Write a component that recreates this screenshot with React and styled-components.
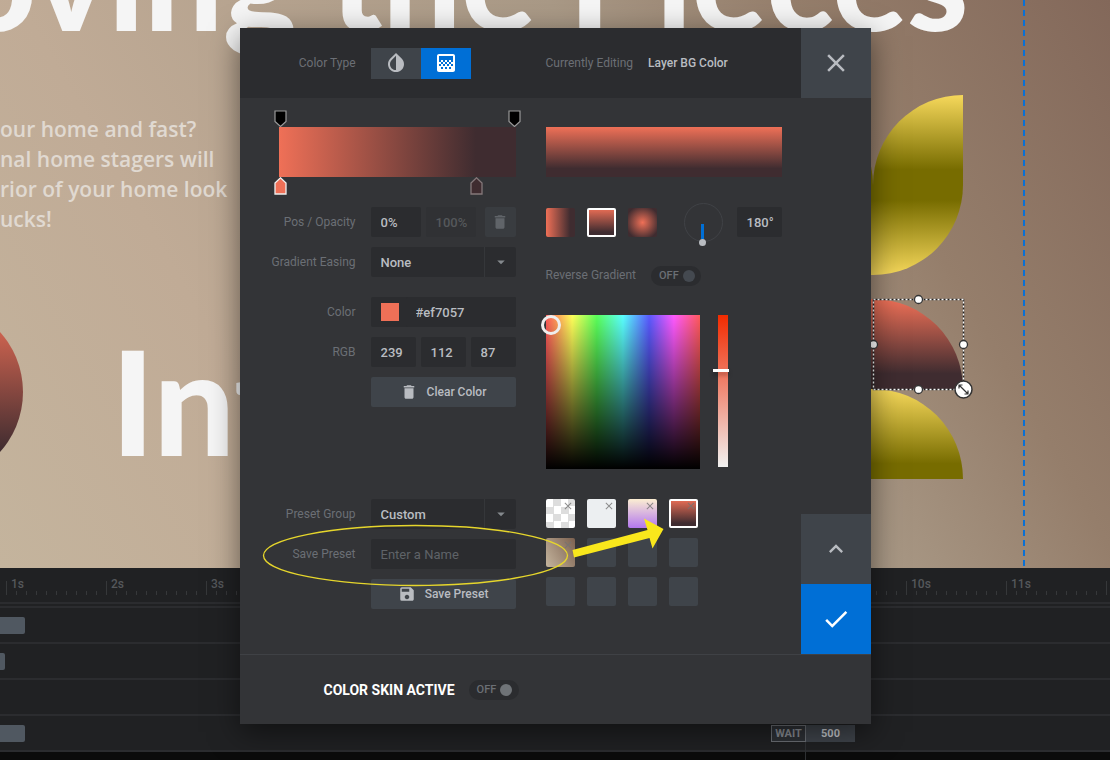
import React from 'react'
import styled, { createGlobalStyle } from 'styled-components';
import {
  MdInvertColors,
  MdGradient,
  MdClose,
  MdDelete,
  MdSave,
  MdKeyboardArrowUp,
  MdCheck,
  MdArrowDropDown
} from 'react-icons/md';

const GlobalStyle = createGlobalStyle`
    * {
        box-sizing: border-box;
    }
    body {
        margin: 0;
        background-color: #0b0b0b;
        font-family: Roboto, "Liberation Sans", sans-serif;
        font-size: 12px;
    }
    button, input, select {
        font-family: inherit;
        margin: 0;
    }
`;

const Page = styled.div`
    position: relative;
    display: flex;
    flex-direction: column;
    min-height: 100vh;
    overflow: hidden;
`;

/* Stage */

const Stage = styled.main`
    position: relative;
    flex: 1;
    overflow: hidden;
    background: linear-gradient(60deg, #c4b49d 0%, #c0ab96 24%, #a99986 61%, #957e6b 78%, #83685a 100%);
`;

const StageTitle = styled.h1`
    position: absolute;
    margin: 0;
    top: ${props => props.top}px;
    left: ${props => props.left}px;
    font-family: Lato, sans-serif;
    font-size: ${props => props.size}px;
    line-height: 160px;
    font-weight: 900;
    white-space: nowrap;
    color: #f5f5f5;
`;

const StageText = styled.p`
    position: absolute;
    top: 114px;
    left: 0;
    margin: 0;
    font-family: "Open Sans", sans-serif;
    font-size: 21px;
    line-height: 30px;
    font-weight: 600;
    white-space: pre;
    color: #e0d9d1;
`;

const Shape = styled.div`
    position: absolute;
    top: ${props => props.top}px;
    left: ${props => props.left}px;
    width: ${props => props.size || 90}px;
    height: ${props => props.size || 90}px;
    border-radius: ${props => props.radius || 0};
    background: linear-gradient(${props => props.flip ? '0deg' : '180deg'}, ${props => props.tone === 'red' ? '#ef7057, #3f2c30 83%' : '#f6d85b, #776c00 83%'});
`;

const Guide = styled.div`
    position: absolute;
    top: 0;
    bottom: 0;
    left: 1023px;
    width: 2px;
    background: repeating-linear-gradient(180deg, #0a70d4 0 6px, transparent 6px 10px);
`;

const SelectionBox = styled.svg`
    position: absolute;
    top: 289px;
    left: 863px;
`;

/* Timeline */

const Timeline = styled.section`
    padding-bottom: 8px;
    background: linear-gradient(#202123, #202123) top / 100% calc(100% - 8px) no-repeat #0b0b0b;
`;

const Ruler = styled.div`
    display: flex;
    height: 36px;
    padding: 12px 0 0 6px;
    border-bottom: 2px solid #2b2c2f;
    overflow: hidden;
`;

const Second = styled.div`
    flex: none;
    width: 100px;
    height: 15px;
    padding-left: 5px;
    font-size: 12px;
    line-height: 8px;
    font-weight: 500;
    color: #55585b;
    background:
        linear-gradient(#36383a, #36383a) left / 1px 14px no-repeat,
        repeating-linear-gradient(90deg, #36383a 0 1px, transparent 1px 10px) bottom / 100% 4px no-repeat;
`;

const Tracks = styled.div`
    margin-top: 2px;
    border-top: 2px solid #2b2c2f;
`;

const Track = styled.div`
    position: relative;
    height: 36px;
    padding-top: 9px;
    border-bottom: 2px solid #2b2c2f;
`;

const Clip = styled.div`
    height: 17px;
    border-radius: 0 2px 2px 0;
    background-color: #505861;
`;

const Wait = styled.div`
    position: absolute;
    top: 9px;
    left: 771px;
    display: flex;
    width: 84px;
    height: 17px;
    font-size: 11px;
    line-height: 15px;
    font-weight: 700;
    text-align: center;
    color: #c5c8cc;
    background-color: #3f444b;

    &::after {
        content: '';
        position: absolute;
        top: 17px;
        left: 34px;
        width: 1px;
        height: 18px;
        background-color: #303235;
    }
`;

const WaitLabel = styled.span`
    width: 35px;
    border: 1px solid #6b6f75;
    color: #888c93;
    background-color: #2e3136;
`;

const WaitValue = styled.span`
    flex: 1;
    padding-top: 1px;
`;

/* Dialog */

const Overlay = styled.div`
    position: absolute;
    inset: 0;
    display: flex;
    justify-content: center;
    align-items: flex-start;
    padding-top: 28px;
`;

const Dialog = styled.div`
    position: relative;
    width: 631px;
    background-color: #333437;
    box-shadow: 0 8px 28px rgba(0, 0, 0, 0.5);
`;

const Header = styled.header`
    display: flex;
    align-items: center;
    gap: 30px;
    height: 70px;
    background-color: #2b2c2f;
`;

const Editing = styled.div`
    display: flex;
    flex: 1;
    gap: 15px;
    color: #6b6f75;
`;

const EditingName = styled.span`
    font-weight: 500;
    color: #b9bcc1;
`;

const SquareButton = styled.button`
    display: flex;
    align-items: center;
    justify-content: center;
    width: 70px;
    height: 70px;
    padding: 0;
    border: none;
    font-size: ${props => props.size || 30}px;
    color: ${props => props.$primary ? '#ffffff' : '#b9bcc1'};
    background-color: ${props => props.$primary ? '#006fd6' : '#3f444a'};
    cursor: pointer;
`;

const Body = styled.div`
    display: flex;
    height: 556px;
`;

const LeftColumn = styled.div`
    width: 276px;
    margin-right: 30px;
    padding-top: 12px;
`;

const RightColumn = styled.div`
    flex: 1;
    padding-top: 29px;
`;

const SideColumn = styled.div`
    display: flex;
    flex-direction: column;
    justify-content: flex-end;
`;

const GradientEditor = styled.div`
    margin: 0 0 13px 39px;
`;

const PinRow = styled.div`
    position: relative;
    height: 17px;
`;

const Pin = styled.svg`
    position: absolute;
    top: 0;
    left: ${props => props.at}%;
    margin-left: -5px;
`;

const GradientBar = styled.div`
    height: 50px;
    background: linear-gradient(90deg, #ef7057, #3f2c30 83%);
`;

const Group = styled.div`
    display: flex;
    flex-direction: column;
    gap: 10px;
    margin-bottom: ${props => props.space || 0}px;
`;

const Field = styled.div`
    display: flex;
    align-items: center;
    gap: 15px;
    width: 276px;
`;

const Label = styled.label`
    width: 116px;
    text-align: right;
    color: #6b6f75;
`;

const Controls = styled.div`
    display: flex;
    gap: ${props => props.gap === undefined ? 5 : props.gap}px;
    width: 145px;
`;

const Input = styled.input`
    width: ${props => props.$width || '100%'};
    height: 30px;
    padding: 0 0 0 10px;
    border: none;
    border-radius: 2px;
    outline: none;
    font-size: 13px;
    font-weight: 500;
    color: #b9bcc1;
    background-color: #2b2c2f;

    &:disabled {
        color: #55585b;
        background-color: #303134;
    }
    &::placeholder {
        font-weight: 400;
        color: #5f6368;
    }
`;

const TypeButton = styled.button`
    display: flex;
    align-items: center;
    justify-content: center;
    width: 50px;
    height: 31px;
    padding: 0;
    border: none;
    font-size: 24px;
    color: ${props => props.$active ? '#ffffff' : '#b9bcc1'};
    background-color: ${props => props.$active ? '#006fd6' : '#3f444a'};
`;

const IconButton = styled.button`
    display: flex;
    align-items: center;
    justify-content: center;
    width: 31px;
    height: 30px;
    margin-left: auto;
    padding: 0;
    border: none;
    border-radius: 2px;
    font-size: 18px;
    color: #606469;
    background-color: #393c40;
`;

const Button = styled.button`
    display: flex;
    align-items: center;
    justify-content: center;
    gap: 9px;
    width: 100%;
    height: 30px;
    padding: 0;
    border: none;
    border-radius: 2px;
    font-size: 12px;
    font-weight: 500;
    color: #b9bcc1;
    background-color: #3f444a;
    cursor: pointer;

    svg {
        font-size: 18px;
    }
`;

const SelectBox = styled.div`
    position: relative;
    width: 100%;

    svg {
        position: absolute;
        top: 6px;
        right: 6px;
        font-size: 18px;
        color: #85898e;
        pointer-events: none;
    }
`;

const Select = styled.select`
    appearance: none;
    width: 100%;
    height: 30px;
    padding: 0 10px;
    border: none;
    border-radius: 2px;
    font-size: 13px;
    font-weight: 500;
    color: #b9bcc1;
    background: linear-gradient(#35373a, #35373a) 113px 0 / 1px 100% no-repeat #2b2c2f;
`;

const ColorField = styled.div`
    display: flex;
    align-items: center;
    width: 100%;
    padding-left: 10px;
    border-radius: 2px;
    background-color: #2b2c2f;
`;

const ColorChip = styled.span`
    flex: none;
    width: 18px;
    height: 18px;
    margin-right: 7px;
    background-color: #ef7057;
`;

const Preview = styled.div`
    width: 236px;
    height: 50px;
    margin-bottom: 30px;
    background: linear-gradient(180deg, #ef7057, #3f2c30 83%);
`;

const StyleRow = styled.div`
    display: flex;
    align-items: center;
    gap: 12px;
    height: 30px;
    margin-bottom: 29px;
`;

const Swatch = styled.button`
    position: relative;
    width: 29px;
    height: 29px;
    padding: 0;
    border: ${props => props.$selected ? '2px solid #ffffff' : 'none'};
    border-radius: 2px;
    background: ${props => props.$fill || '#3f444a'};
    background-origin: border-box;
    cursor: pointer;

    svg {
        position: absolute;
        top: ${props => props.$selected ? -1 : 1}px;
        right: ${props => props.$selected ? -1 : 1}px;
        font-size: 12px;
        color: rgba(115, 115, 115, 0.8);
    }
`;

const Dial = styled.svg`
    flex: none;
    margin-left: 15px;
    overflow: visible;
`;

const ReverseRow = styled.div`
    display: flex;
    gap: 15px;
    height: 20px;
    margin-bottom: 29px;
    line-height: 18px;
    color: #6b6f75;
`;

const Toggle = styled.label`
    position: relative;
    display: flex;
    align-items: center;
    gap: 4px;
    width: 50px;
    height: 20px;
    padding-left: 8px;
    border-radius: 10px;
    font-size: 11px;
    font-weight: 500;
    color: #6b6f75;
    background-color: #2b2c2f;
    cursor: pointer;
`;

const ToggleInput = styled.input.attrs({ type: 'checkbox' })`
    appearance: none;
    order: 1;
    width: 12px;
    height: 12px;
    border-radius: 50%;
    background-color: ${props => props.$light ? '#6f7377' : '#444950'};
`;

const PickerRow = styled.div`
    display: flex;
    gap: 18px;
    margin-bottom: 30px;
`;

const Picker = styled.div`
    position: relative;
    width: 154px;
    height: 154px;
    background:
        linear-gradient(180deg, transparent, #000000),
        linear-gradient(90deg, #ff5a5a, #ffff5a 17%, #5aff5a 33%, #5affff 50%, #5a5aff 67%, #ff5aff 83%, #ff5a5a);
`;

const PickerHandle = styled.div`
    position: absolute;
    top: 0;
    left: -5px;
    width: 20px;
    height: 20px;
    border: 3px solid #eeeeee;
    border-radius: 50%;
`;

const Shade = styled.input.attrs({ type: 'range' })`
    appearance: none;
    writing-mode: vertical-lr;
    width: 10px;
    height: 152px;
    background: linear-gradient(180deg, #f22b00, #ef7057 36%, #f1f1f0);

    &::-webkit-slider-thumb {
        appearance: none;
        width: 16px;
        height: 3px;
        margin-left: -3px;
        background-color: #ffffff;
        box-shadow: 0 3px 4px rgba(0, 0, 0, 0.3);
    }
`;

const Presets = styled.div`
    display: grid;
    grid-template-columns: repeat(4, 29px);
    gap: 10px 12px;
`;

const Footer = styled.footer`
    display: flex;
    align-items: center;
    gap: 14px;
    height: 70px;
    padding-left: 84px;
    border-top: 1px solid #3f4145;
`;

const FooterTitle = styled.span`
    font-size: 14px;
    font-weight: 700;
    color: #ffffff;
`;

const Annotation = styled.svg`
    position: absolute;
    top: 488px;
    left: 20px;
    pointer-events: none;
`;

const red = '#ef7057, #3f2c30 83%';

const presets = [
  { name: 'Transparent', fill: 'repeating-conic-gradient(#dddddd 0 25%, #ffffff 0 50%) 0 0 / 15px 15px', closable: true },
  { name: 'White', fill: '#eceff1', closable: true },
  { name: 'Violet', fill: 'linear-gradient(#fbeed2, #b377ee)', closable: true },
  { name: 'Sunset', fill: `linear-gradient(${red})`, closable: true, selected: true },
  { name: 'Sand', fill: 'linear-gradient(60deg, #c4b49d, #7c6150)', closable: true },
  { name: 'Empty 1' },
  { name: 'Empty 2' },
  { name: 'Empty 3' },
  { name: 'Empty 4' },
  { name: 'Empty 5' },
  { name: 'Empty 6' },
  { name: 'Empty 7' },
];

const seconds = [1, 2, 3, 4, 5, 6, 7, 8, 9, 10, 11];

const OpacityPin = ({ at }) => (
  <Pin at={at} width="13" height="17">
    <path d="M1 1H12V11.5L6.5 16.5L1 11.5Z" fill="#000" stroke="#999" strokeWidth="1.2" />
  </Pin>
)

const ColorPin = ({ at, fill, stroke }) => (
  <Pin at={at} width="13" height="18">
    <path d="M1 17H12V6L6.5 0.8L1 6Z" fill={fill} stroke={stroke} strokeWidth="1.3" />
  </Pin>
)

const Selection = () => (
  <SelectionBox width="112" height="112">
    <rect x="10.5" y="10.5" width="90" height="90" fill="none" stroke="#222" strokeWidth="1.4" />
    <rect x="10.5" y="10.5" width="90" height="90" fill="none" stroke="#fff" strokeWidth="1.4" strokeDasharray="2 2" />
    {[[55, 10], [10, 55], [100, 55], [55, 100]].map(([x, y]) => (
      <circle key={`${x}-${y}`} cx={x + 0.5} cy={y + 0.5} r="4" fill="#fff" stroke="#333" strokeWidth="1.3" />
    ))}
    <circle cx="100.5" cy="100.5" r="8.5" fill="#fff" stroke="#333" strokeWidth="1.5" />
    <path d="M96.5 96.5L104.5 104.5M96 99.5V96H99.5M105 101.5V105H101.5" fill="none" stroke="#333" strokeWidth="1.2" />
  </SelectionBox>
)

const App = () => {
  return (
    <Page>
        <GlobalStyle />
        <Stage>
            <StageTitle top={-102} left={-174} size={139}>Moving the Pieces</StageTitle>
            <StageText>
                {'our home and fast?\nnal home stagers will\nrior of your home look\nucks!'}
            </StageText>
            <Shape tone='red' top={302} left={-157} size={180} radius='50%' />
            <StageTitle as='h2' top={321} left={111} size={144}>Int</StageTitle>
            <Shape top={95} left={783} radius='0 100% 0 0' />
            <Shape top={95} left={873} radius='100% 0 0 0' />
            <Shape top={185} left={783} flip />
            <Shape top={185} left={873} radius='0 0 100% 0' flip />
            <Shape tone='red' top={299} left={783} />
            <Shape tone='red' top={299} left={873} radius='0 100% 0 0' />
            <Shape top={389} left={783} />
            <Shape top={389} left={873} radius='0 100% 0 0' />
            <Guide />
            <Selection />
        </Stage>
        <Timeline>
            <Ruler>
                {seconds.map(s => <Second key={s}>{s}s</Second>)}
                <Second />
            </Ruler>
            <Tracks>
                <Track><Clip style={{ width: 25 }} /></Track>
                <Track><Clip style={{ width: 5 }} /></Track>
                <Track />
                <Track>
                    <Clip style={{ width: 25 }} />
                    <Wait>
                        <WaitLabel>WAIT</WaitLabel>
                        <WaitValue>500</WaitValue>
                    </Wait>
                </Track>
            </Tracks>
        </Timeline>
        <Overlay>
            <Dialog role='dialog' aria-label='Color'>
                <Header>
                    <Field>
                        <Label as='span'>Color Type</Label>
                        <Controls gap={0}>
                            <TypeButton aria-label='Solid'><MdInvertColors /></TypeButton>
                            <TypeButton $active aria-label='Gradient'><MdGradient /></TypeButton>
                        </Controls>
                    </Field>
                    <Editing>
                        Currently Editing <EditingName>Layer BG Color</EditingName>
                    </Editing>
                    <SquareButton aria-label='Close'><MdClose /></SquareButton>
                </Header>
                <Body>
                    <LeftColumn>
                        <GradientEditor>
                            <PinRow>
                                <OpacityPin at={0} />
                                <OpacityPin at={99} />
                            </PinRow>
                            <GradientBar />
                            <PinRow>
                                <ColorPin at={0} fill='#ef7057' stroke='#eee' />
                                <ColorPin at={83} fill='#3f2c30' stroke='#85787a' />
                            </PinRow>
                        </GradientEditor>
                        <Group space={20}>
                            <Field>
                                <Label htmlFor='pos'>Pos / Opacity</Label>
                                <Controls>
                                    <Input id='pos' $width='50px' defaultValue='0%' />
                                    <Input $width='50px' defaultValue='100%' disabled aria-label='Opacity' />
                                    <IconButton aria-label='Delete stop'><MdDelete /></IconButton>
                                </Controls>
                            </Field>
                            <Field>
                                <Label htmlFor='easing'>Gradient Easing</Label>
                                <Controls>
                                    <SelectBox>
                                        <Select id='easing'><option>None</option></Select>
                                        <MdArrowDropDown />
                                    </SelectBox>
                                </Controls>
                            </Field>
                        </Group>
                        <Group space={92}>
                            <Field>
                                <Label htmlFor='color'>Color</Label>
                                <Controls>
                                    <ColorField>
                                        <ColorChip />
                                        <Input id='color' defaultValue='#ef7057' />
                                    </ColorField>
                                </Controls>
                            </Field>
                            <Field>
                                <Label htmlFor='red'>RGB</Label>
                                <Controls>
                                    <Input id='red' $width='45px' defaultValue='239' />
                                    <Input $width='45px' defaultValue='112' aria-label='Green' />
                                    <Input $width='45px' defaultValue='87' aria-label='Blue' />
                                </Controls>
                            </Field>
                            <Field>
                                <Label as='span' />
                                <Controls>
                                    <Button><MdDelete />Clear Color</Button>
                                </Controls>
                            </Field>
                        </Group>
                        <Group>
                            <Field>
                                <Label htmlFor='group'>Preset Group</Label>
                                <Controls>
                                    <SelectBox>
                                        <Select id='group'><option>Custom</option></Select>
                                        <MdArrowDropDown />
                                    </SelectBox>
                                </Controls>
                            </Field>
                            <Field>
                                <Label htmlFor='preset'>Save Preset</Label>
                                <Controls>
                                    <Input id='preset' placeholder='Enter a Name' />
                                </Controls>
                            </Field>
                            <Field>
                                <Label as='span' />
                                <Controls>
                                    <Button><MdSave />Save Preset</Button>
                                </Controls>
                            </Field>
                        </Group>
                    </LeftColumn>
                    <RightColumn>
                        <Preview />
                        <StyleRow>
                            <Swatch aria-label='Horizontal' $fill={`linear-gradient(90deg, ${red})`} />
                            <Swatch aria-label='Vertical' $fill={`linear-gradient(180deg, ${red})`} $selected />
                            <Swatch aria-label='Radial' $fill={`radial-gradient(circle, ${red})`} />
                            <Dial width="41" height="39">
                                <circle cx="19.5" cy="19.5" r="19" fill="none" stroke="#404246" />
                                <path d="M18.5 21V36" stroke="#006fd6" strokeWidth="3" />
                                <circle cx="18.5" cy="39.5" r="3.5" fill="#b9bcc1" />
                            </Dial>
                            <Input $width='45px' defaultValue='180°' aria-label='Angle' />
                        </StyleRow>
                        <ReverseRow>
                            <span>Reverse Gradient</span>
                            <Toggle>
                                <ToggleInput aria-label='Reverse Gradient' />
                                OFF
                            </Toggle>
                        </ReverseRow>
                        <PickerRow>
                            <Picker>
                                <PickerHandle />
                            </Picker>
                            <Shade min='0' max='100' defaultValue='36' aria-label='Saturation' />
                        </PickerRow>
                        <Presets>
                            {presets.map(p => (
                              <Swatch key={p.name} aria-label={p.name} $fill={p.fill} $selected={p.selected}>
                                  {p.closable && <MdClose />}
                              </Swatch>
                            ))}
                        </Presets>
                    </RightColumn>
                    <SideColumn>
                        <SquareButton size={28} aria-label='Collapse'><MdKeyboardArrowUp /></SquareButton>
                        <SquareButton $primary aria-label='Apply'><MdCheck /></SquareButton>
                    </SideColumn>
                </Body>
                <Footer>
                    <FooterTitle>COLOR SKIN ACTIVE</FooterTitle>
                    <Toggle>
                        <ToggleInput $light aria-label='Color skin active' />
                        OFF
                    </Toggle>
                </Footer>
                <Annotation width="410" height="74">
                    <ellipse cx="155.5" cy="39.5" rx="152" ry="30" fill="none" stroke="#e6d62c" strokeWidth="1.3" />
                    <path d="M312.5 34L387.5 14L384 2.5L403.5 13L392.5 32.5L389.5 22L314 41.5Z" fill="#f9e71c" />
                </Annotation>
            </Dialog>
        </Overlay>
    </Page>
  )
}

export default App
